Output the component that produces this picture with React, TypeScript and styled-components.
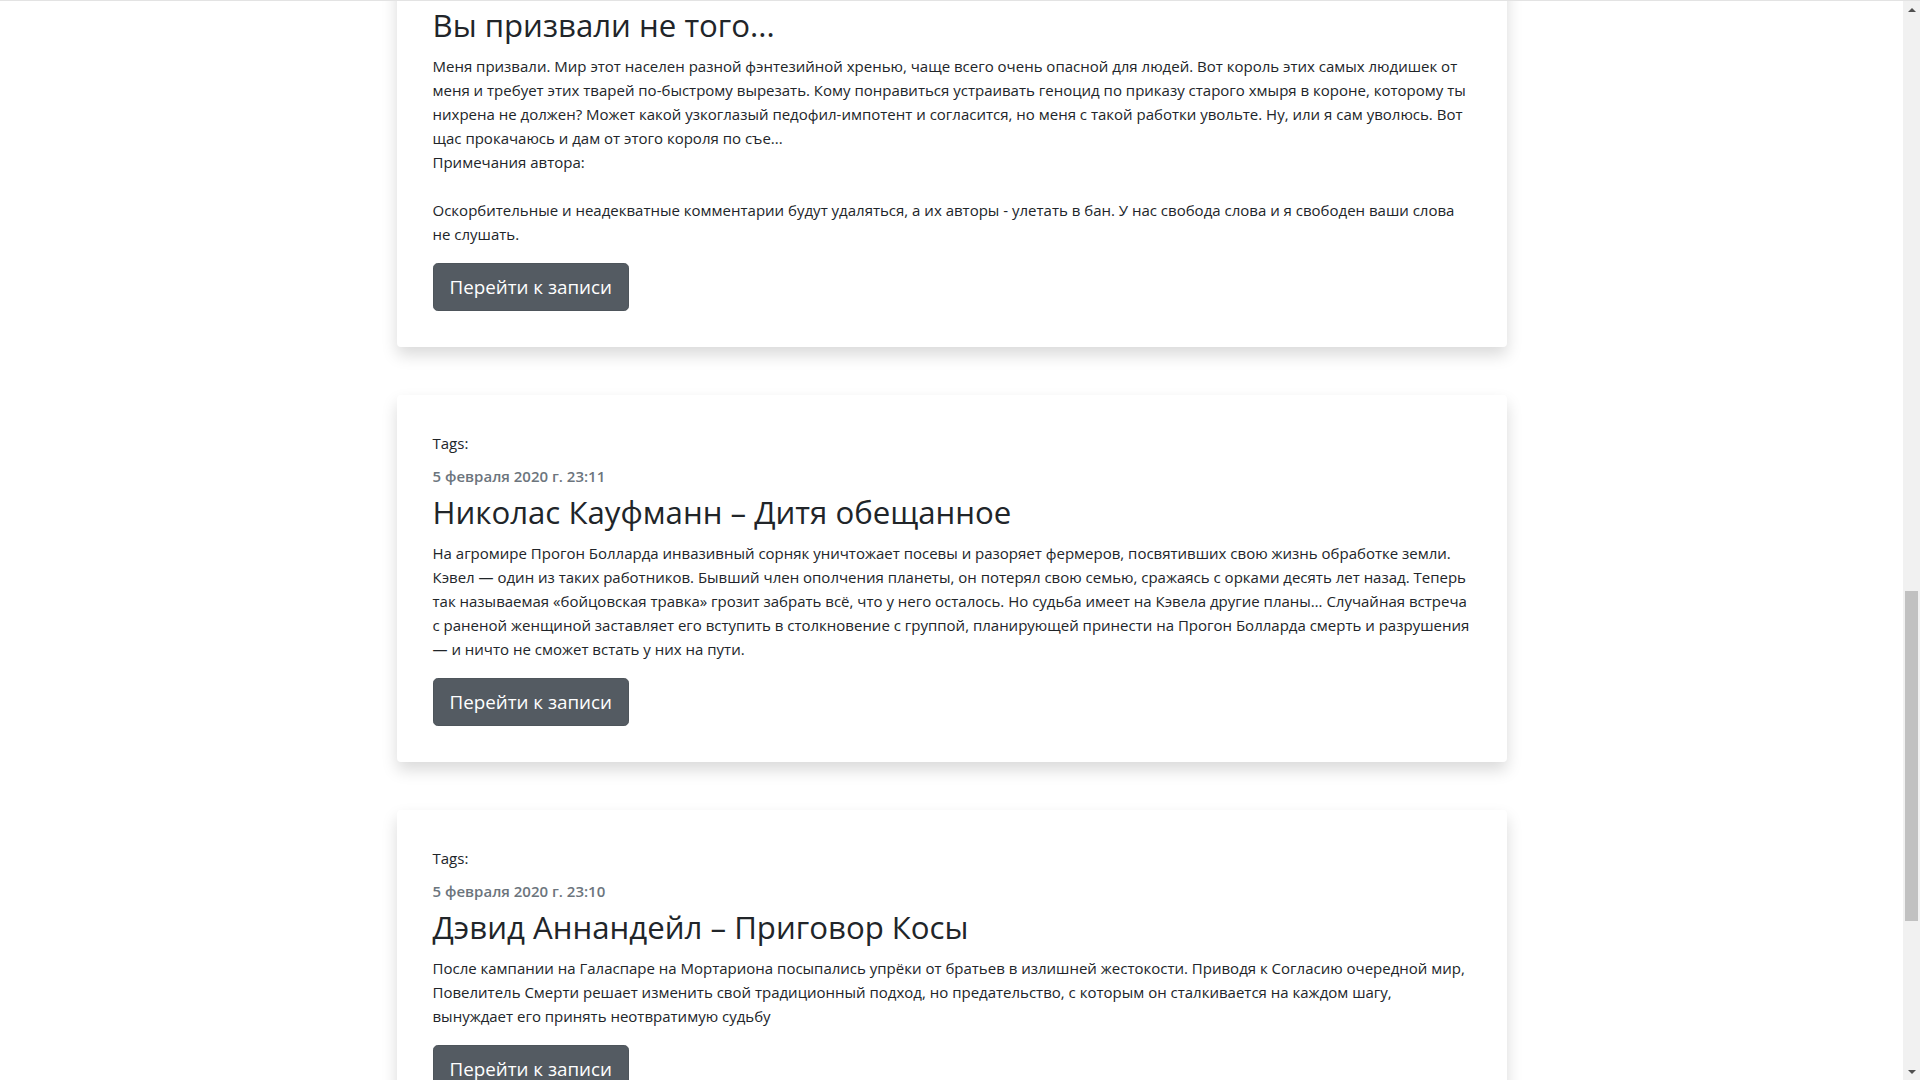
import styled, { createGlobalStyle } from "styled-components";

const GlobalStyle = createGlobalStyle`
  html, body {
    margin: 0;
    padding: 0;
    height: 100%;
    overflow: hidden;
    background: #fff;
  }
  body {
    font-family: "Open Sans", "Noto Sans", sans-serif;
    color: #212529;
  }
`;

const Page = styled.div`
  display: flex;
  height: 100vh;
  border-top: 1px solid #e3e3e3;
  box-sizing: border-box;
`;

const Viewport = styled.main`
  flex: 1;
  overflow: hidden;
`;

// the page is scrolled down, so the first card starts above the top edge
const Feed = styled.div<{ $offset: number }>`
  width: 1110px;
  margin: ${(p) => -p.$offset}px auto 0;
  display: flex;
  flex-direction: column;
  gap: 48px;
`;

const Card = styled.article`
  background: #fff;
  border-radius: 4px;
  padding: 36px;
  box-shadow: 0 8px 16px rgba(0, 0, 0, 0.15);
`;

const Tags = styled.div`
  font-size: 15px;
  line-height: 24px;
  margin-bottom: 9px;
`;

const Date = styled.div`
  font-size: 15px;
  font-weight: 600;
  line-height: 24px;
  color: #6c757d;
  margin-bottom: 5px;
`;

const Title = styled.h2`
  font-size: 31.2px;
  font-weight: 500;
  line-height: 38px;
  margin: 0 0 10px;
  color: #212529;
`;

const Text = styled.p`
  font-size: 15px;
  line-height: 24px;
  margin: 0 0 17px;
  white-space: pre-line;
`;

const Button = styled.button`
  display: inline-block;
  font-family: inherit;
  font-size: 18.8px;
  line-height: 30px;
  padding: 8px 16px;
  color: #fff;
  background: #545b62;
  border: 1px solid #4e555b;
  border-radius: 4.8px;
  cursor: pointer;
`;

const Scrollbar = styled.aside`
  width: 17px;
  background: #f1f1f1;
  display: flex;
  flex-direction: column;
`;

const Arrow = styled.div`
  height: 17px;
  display: flex;
  align-items: center;
  justify-content: center;
  color: #505050;
`;

const Track = styled.div<{ $top: number }>`
  flex: 1;
  padding-top: ${(p) => p.$top}px;
`;

const Thumb = styled.div<{ $height: number }>`
  height: ${(p) => p.$height}px;
  margin: 0 2px;
  background: #c1c1c1;
`;

const posts = [
  {
    date: "5 февраля 2020 г. 23:12",
    title: "Вы призвали не того...",
    text: "Меня призвали. Мир этот населен разной фэнтезийной хренью, чаще всего очень опасной для людей. Вот король этих самых людишек от меня и требует этих тварей по-быстрому вырезать. Кому понравиться устраивать геноцид по приказу старого хмыря в короне, которому ты нихрена не должен? Может какой узкоглазый педофил-импотент и согласится, но меня с такой работки увольте. Ну, или я сам уволюсь. Вот щас прокачаюсь и дам от этого короля по съе...\nПримечания автора:\n\nОскорбительные и неадекватные комментарии будут удаляться, а их авторы - улетать в бан. У нас свобода слова и я свободен ваши слова не слушать.",
  },
  {
    date: "5 февраля 2020 г. 23:11",
    title: "Николас Кауфманн – Дитя обещанное",
    text: "На агромире Прогон Болларда инвазивный сорняк уничтожает посевы и разоряет фермеров, посвятивших свою жизнь обработке земли. Кэвел — один из таких работников. Бывший член ополчения планеты, он потерял свою семью, сражаясь с орками десять лет назад. Теперь так называемая «бойцовская травка» грозит забрать всё, что у него осталось. Но судьба имеет на Кэвела другие планы… Случайная встреча с раненой женщиной заставляет его вступить в столкновение с группой, планирующей принести на Прогон Болларда смерть и разрушения — и ничто не сможет встать у них на пути.",
  },
  {
    date: "5 февраля 2020 г. 23:10",
    title: "Дэвид Аннандейл – Приговор Косы",
    text: "После кампании на Галаспаре на Мортариона посыпались упрёки от братьев в излишней жестокости. Приводя к Согласию очередной мир, Повелитель Смерти решает изменить свой традиционный подход, но предательство, с которым он сталкивается на каждом шагу, вынуждает его принять неотвратимую судьбу",
  },
];

const Triangle = ({ up }: { up?: boolean }) => (
  <svg width="8" height="4" viewBox="0 0 8 4">
    <path d={up ? "M0 4 L4 0 L8 4 Z" : "M0 0 L4 4 L8 0 Z"} fill="currentColor" />
  </svg>
);

const App = () => {
  return (
    <>
      <GlobalStyle />
      <Page>
        <Viewport>
          <Feed $offset={93}>
            {posts.map((post) => (
              <Card key={post.title}>
                <Tags>Tags:</Tags>
                <Date>{post.date}</Date>
                <Title>{post.title}</Title>
                <Text>{post.text}</Text>
                <Button>Перейти к записи</Button>
              </Card>
            ))}
          </Feed>
        </Viewport>
        <Scrollbar>
          <Arrow>
            <Triangle up />
          </Arrow>
          <Track $top={573}>
            <Thumb $height={330} />
          </Track>
          <Arrow>
            <Triangle />
          </Arrow>
        </Scrollbar>
      </Page>
    </>
  );
};

export default App;
